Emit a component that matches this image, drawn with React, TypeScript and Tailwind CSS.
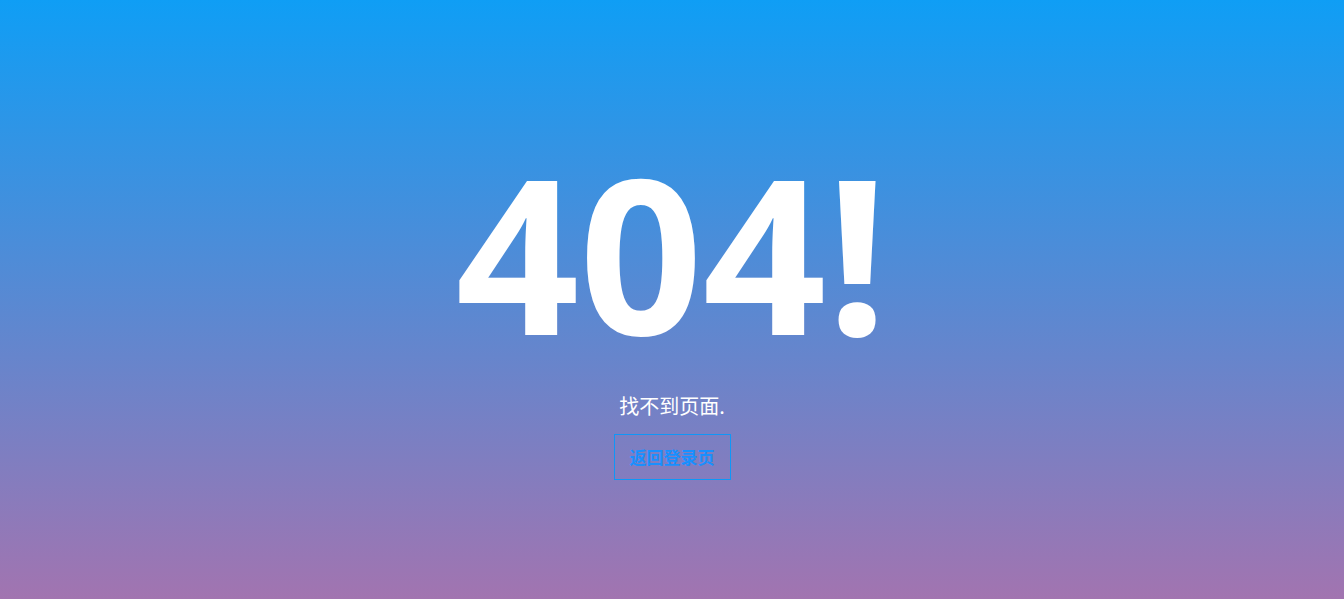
import React from "react";

export default function App() {
  return (
    <div className="w-full h-[599px] overflow-hidden bg-[linear-gradient(to_bottom,#0f9ef5,#a274b0)] flex flex-col items-center pt-[116px] font-['Noto_Sans_CJK_SC',sans-serif]">
      <h1 className="text-[216px] leading-[1.25] font-bold text-white m-0 font-[Open_Sans]">
        404!
      </h1>
      <p className="mt-[7px] text-[20px] leading-[26px] text-white">
        找不到页面.
      </p>
      <button className="mt-[15px] w-[117px] h-[46px] border border-[#0f97f7] text-[#1890ff] text-[17px] font-bold bg-transparent">
        返回登录页
      </button>
    </div>
  );
}
